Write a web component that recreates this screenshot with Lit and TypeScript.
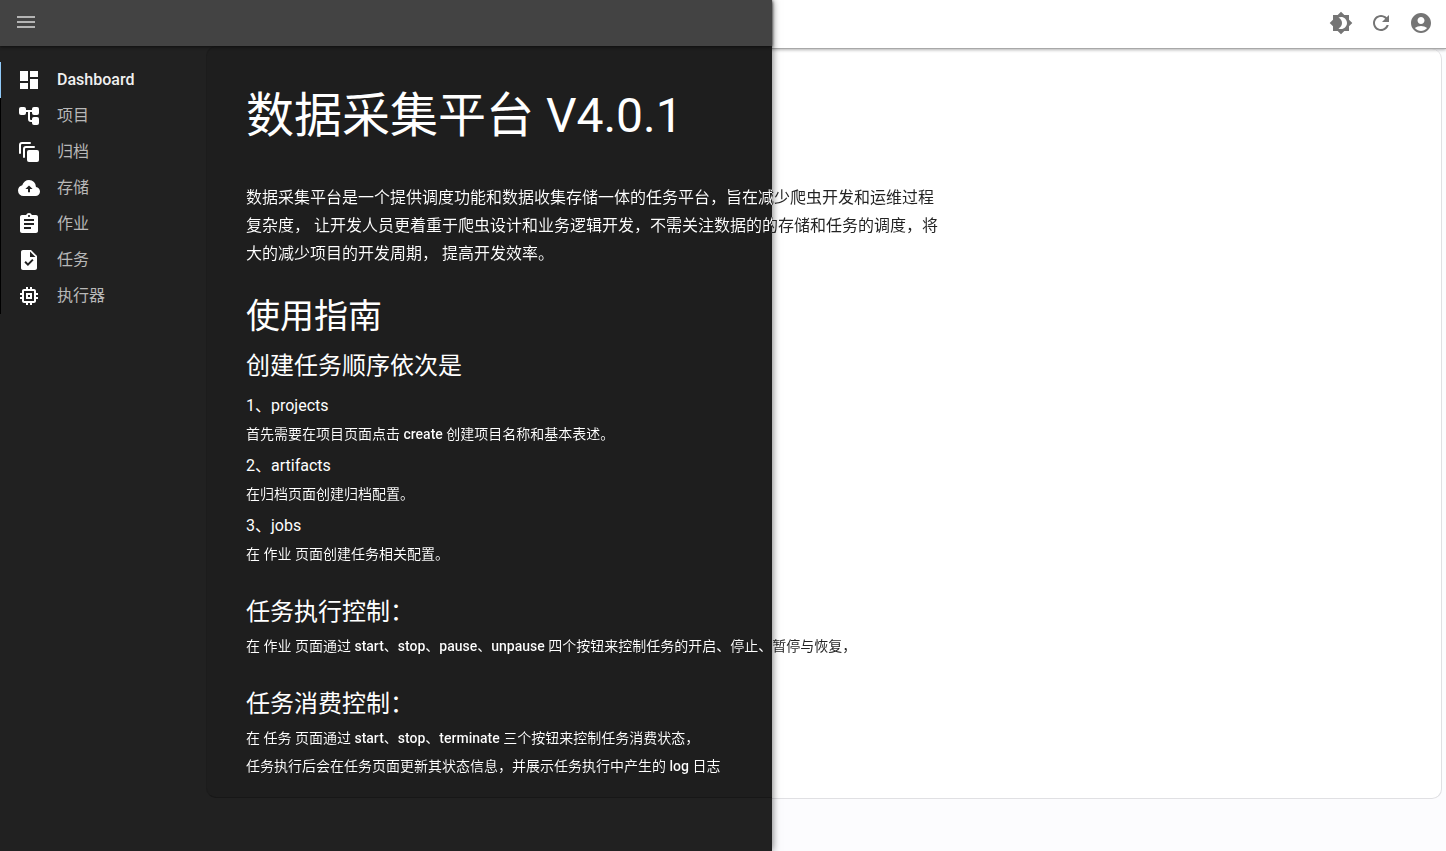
import { LitElement, html, css, svg } from "lit";
import { customElement } from "lit/decorators.js";
import { classMap } from "lit/directives/class-map.js";

const icons = {
  menu: svg`<path d="M3 17h18v-2H3v2zm0-5h18v-2H3v2zm0-7v2h18V5H3z"/>`,
  dashboard: svg`<path d="M3 13h8V3H3v10zm0 8h8v-6H3v6zm10 0h8V11h-8v10zm0-18v6h8V3h-8z"/>`,
  tree: svg`<rect x="2" y="3" width="7" height="8" rx="2"/><rect x="15" y="3" width="7" height="8" rx="2"/><rect x="15" y="13" width="7" height="8" rx="2"/><path d="M9 7h6M12 7v8a2 2 0 0 0 2 2h2" fill="none" stroke="currentColor" stroke-width="2"/>`,
  layers: svg`<path d="M3 13V5a2 2 0 0 1 2-2h8M7 17V9a2 2 0 0 1 2-2h8" fill="none" stroke="currentColor" stroke-width="2" stroke-linecap="round"/><rect x="10" y="10" width="12" height="12" rx="2"/>`,
  cloud: svg`<path fill-rule="evenodd" d="M6.5 20Q4.22 20 2.61 18.43 1 16.85 1 14.58 1 12.63 2.17 11.1 3.35 9.57 5.25 9.15 5.88 6.85 7.75 5.43 9.63 4 12 4 14.93 4 16.96 6.04 19 8.07 19 11 20.73 11.2 21.86 12.5 23 13.78 23 15.5 23 17.38 21.69 18.69 20.38 20 18.5 20ZM12 9.4L8.4 13H11v3.3h2V13h2.6Z"/>`,
  assignment: svg`<path d="M19 3h-4.18C14.4 1.84 13.3 1 12 1c-1.3 0-2.4.84-2.82 2H5c-1.1 0-2 .9-2 2v14c0 1.1.9 2 2 2h14c1.1 0 2-.9 2-2V5c0-1.1-.9-2-2-2zm-7 0c.55 0 1 .45 1 1s-.45 1-1 1-1-.45-1-1 .45-1 1-1zm2 14H7v-2h7v2zm3-4H7v-2h10v2zm0-4H7V7h10v2z"/>`,
  task: svg`<path d="M14 2H6c-1.1 0-1.99.9-1.99 2L4 20c0 1.1.89 2 1.99 2H18c1.1 0 2-.9 2-2V8l-6-6zm-3.06 16L7.4 14.46l1.41-1.41 2.12 2.12 4.24-4.24 1.41 1.41L10.94 18zM13 9V3.5L18.5 9H13z"/>`,
  memory: svg`<path d="M15 9H9v6h6V9zm-2 4h-2v-2h2v2zm8-2V9h-2V7c0-1.1-.9-2-2-2h-2V3h-2v2h-2V3H9v2H7c-1.1 0-2 .9-2 2v2H3v2h2v2H3v2h2v2c0 1.1.9 2 2 2h2v2h2v-2h2v2h2v-2h2c1.1 0 2-.9 2-2v-2h2v-2h-2v-2h2zm-4 6H7V7h10v10z"/>`,
  theme: svg`<path d="M20 8.69V4h-4.69L12 .69 8.69 4H4v4.69L.69 12 4 15.31V20h4.69L12 23.31 15.31 20H20v-4.69L23.31 12 20 8.69zM12 18c-.89 0-1.74-.2-2.5-.55C11.56 16.5 13 14.42 13 12s-1.44-4.5-3.5-5.45C10.26 6.2 11.11 6 12 6c3.31 0 6 2.69 6 6s-2.69 6-6 6z"/>`,
  refresh: svg`<path d="M17.65 6.35C16.2 4.9 14.21 4 12 4c-4.42 0-7.99 3.58-7.99 8s3.57 8 7.99 8c3.73 0 6.84-2.55 7.73-6h-2.08c-.82 2.33-3.04 4-5.65 4-3.31 0-6-2.69-6-6s2.69-6 6-6c1.66 0 3.14.69 4.22 1.78L13 11h7V4l-2.35 2.35z"/>`,
  account: svg`<path d="M12 2C6.48 2 2 6.48 2 12s4.48 10 10 10 10-4.48 10-10S17.52 2 12 2zm0 4c1.93 0 3.5 1.57 3.5 3.5S13.93 13 12 13s-3.5-1.57-3.5-3.5S10.07 6 12 6zm0 14c-2.03 0-4.43-.82-6.14-2.88C7.55 15.8 9.68 15 12 15s4.45.8 6.14 2.12C16.43 19.18 14.03 20 12 20z"/>`,
};

const icon = (name: keyof typeof icons) =>
  html`<svg class="icon" viewBox="0 0 24 24" fill="currentColor" aria-hidden="true">${icons[name]}</svg>`;

const menu: { icon: keyof typeof icons; label: string; active?: boolean }[] = [
  { icon: "dashboard", label: "Dashboard", active: true },
  { icon: "tree", label: "项目" },
  { icon: "layers", label: "归档" },
  { icon: "cloud", label: "存储" },
  { icon: "assignment", label: "作业" },
  { icon: "task", label: "任务" },
  { icon: "memory", label: "执行器" },
];

const steps = [
  ["1、projects", "首先需要在项目页面点击 create 创建项目名称和基本表述。"],
  ["2、artifacts", "在归档页面创建归档配置。"],
  ["3、jobs", "在 作业 页面创建任务相关配置。"],
];

@customElement("app-root")
export class AppRoot extends LitElement {
  static styles = css`
    :host {
      --split: calc(50vw + 49px);
      --sidebar: 206px;
      display: block;
      font-family: Roboto, "Noto Sans CJK SC", sans-serif;
      font-size: 16px;
      color: #fff;
    }
    * {
      box-sizing: border-box;
    }
    /* Light theme, dark theme and content share one grid cell. */
    .page {
      display: grid;
      min-height: 100vh;
      overflow: hidden;
    }
    .page > * {
      grid-area: 1 / 1;
      min-width: 0;
    }
    .theme {
      display: flex;
      flex-direction: column;
    }
    .bar {
      flex: none;
      z-index: 1;
    }
    .paper {
      flex: 1;
    }
    .light {
      background: #fcfcfe;
    }
    .light .bar {
      height: 49px;
      background: #fff;
      box-shadow: 0 1px 3px rgba(0, 0, 0, 0.3);
      border-bottom: 1px solid #a8a8a8;
    }
    .light .paper {
      margin: 0 4px 52px var(--sidebar);
      background: #fff;
      border: 1px solid #e0e0e3;
      border-top: 0;
      border-radius: 10px;
    }
    .dark {
      z-index: 1;
      width: var(--split);
      background: #212121;
      box-shadow: 0 0 8px rgba(0, 0, 0, 0.6);
    }
    .dark .bar {
      height: 46px;
      background: #434343;
      box-shadow: 0 1px 3px #0f0f0f;
    }
    .dark .paper {
      margin: 0 0 53px var(--sidebar);
      background: #1e1e1e;
      border: 1px solid #1c1c1c;
      border-bottom-color: #171717;
      border-right: 0;
      border-radius: 10px 0 0 10px;
    }
    .app {
      z-index: 2;
      display: flex;
      flex-direction: column;
    }
    .header {
      display: flex;
      align-items: center;
      justify-content: space-between;
      height: 46px;
      padding: 0 5px 0 6px;
    }
    .actions {
      display: flex;
    }
    .button {
      display: grid;
      place-items: center;
      width: 40px;
      height: 40px;
      padding: 0;
      border: 0;
      background: none;
      color: #757575;
      cursor: pointer;
    }
    .toggle {
      color: #b4b4b4;
    }
    .icon {
      display: block;
      flex: none;
      width: 24px;
      height: 24px;
    }
    .body {
      display: flex;
    }
    .nav {
      flex: none;
      width: var(--sidebar);
      padding-top: 16px;
    }
    .link {
      display: flex;
      align-items: center;
      gap: 16px;
      height: 36px;
      padding-left: 16px;
      border-left: 1px solid #000;
      color: #fff;
      text-decoration: none;
    }
    .label {
      line-height: 24px;
      color: #b8b8b8;
    }
    .active {
      border-left-color: #90caf9;
    }
    .active .label {
      color: #f0f0f0;
      font-weight: 500;
    }
    .content {
      flex: 1;
      min-width: 0;
      padding: 42px 40px 70px;
    }
    h1,
    h2,
    h3,
    h4,
    p {
      margin: 0;
      font-weight: 400;
    }
    .title {
      font-size: 48px;
      line-height: 56px;
    }
    /* Text that crosses the edge of the dark theme changes colour there. */
    .intro,
    .text {
      color: transparent;
      background: linear-gradient(to right, #fff var(--split), #222 var(--split)) fixed;
      -webkit-background-clip: text;
      background-clip: text;
      line-height: 28px;
    }
    .intro {
      margin-top: 40px;
    }
    .guide {
      margin-top: 28px;
      font-size: 34px;
      line-height: 40px;
    }
    .section {
      margin-top: 28px;
      font-size: 24px;
      line-height: 32px;
    }
    .guide + .section {
      margin: 14px 0 12px;
    }
    .step {
      margin-top: 6px;
      font-size: 16px;
      line-height: 24px;
    }
    .text {
      margin-top: 4px;
      font-size: 14px;
    }
    .step + .text {
      margin-top: 2px;
    }
    .text + .text {
      margin-top: 0;
    }
    .latin {
      font-weight: 500;
    }
  `;

  private latin(text: string) {
    return text
      .split(/([a-z]+)/)
      .map((part, i) => (i % 2 ? html`<span class="latin">${part}</span>` : part));
  }

  render() {
    return html`
      <div class="page">
        <div class="theme light"><div class="bar"></div><div class="paper"></div></div>
        <div class="theme dark"><div class="bar"></div><div class="paper"></div></div>
        <div class="app">
          <header class="header">
            <button class="button toggle" aria-label="Menu">${icon("menu")}</button>
            <div class="actions">
              <button class="button" aria-label="Theme">${icon("theme")}</button>
              <button class="button" aria-label="Refresh">${icon("refresh")}</button>
              <button class="button" aria-label="Profile">${icon("account")}</button>
            </div>
          </header>
          <div class="body">
            <nav class="nav">
              ${menu.map(
                (item) => html`<a class=${classMap({ link: true, active: !!item.active })} href="#">
                  ${icon(item.icon)}<span class="label">${item.label}</span>
                </a>`
              )}
            </nav>
            <main class="content">
              <h1 class="title">数据采集平台 V4.0.1</h1>
              <p class="intro">
                数据采集平台是一个提供调度功能和数据收集存储一体的任务平台，旨在减少爬虫开发和运维过程<br />复杂度，
                让开发人员更着重于爬虫设计和业务逻辑开发，不需关注数据的的存储和任务的调度，将<br />大的减少项目的开发周期，
                提高开发效率。
              </p>
              <h2 class="guide">使用指南</h2>
              <h3 class="section">创建任务顺序依次是</h3>
              ${steps.map(
                ([name, text]) => html`<h4 class="step">${name}</h4>
                  <p class="text">${this.latin(text)}</p>`
              )}
              <h3 class="section">任务执行控制：</h3>
              <p class="text">
                ${this.latin("在 作业 页面通过 start、stop、pause、unpause 四个按钮来控制任务的开启、停止、暂停与恢复，")}
              </p>
              <h3 class="section">任务消费控制：</h3>
              <p class="text">${this.latin("在 任务 页面通过 start、stop、terminate 三个按钮来控制任务消费状态，")}</p>
              <p class="text">${this.latin("任务执行后会在任务页面更新其状态信息，并展示任务执行中产生的 log 日志")}</p>
            </main>
          </div>
        </div>
      </div>
    `;
  }
}
